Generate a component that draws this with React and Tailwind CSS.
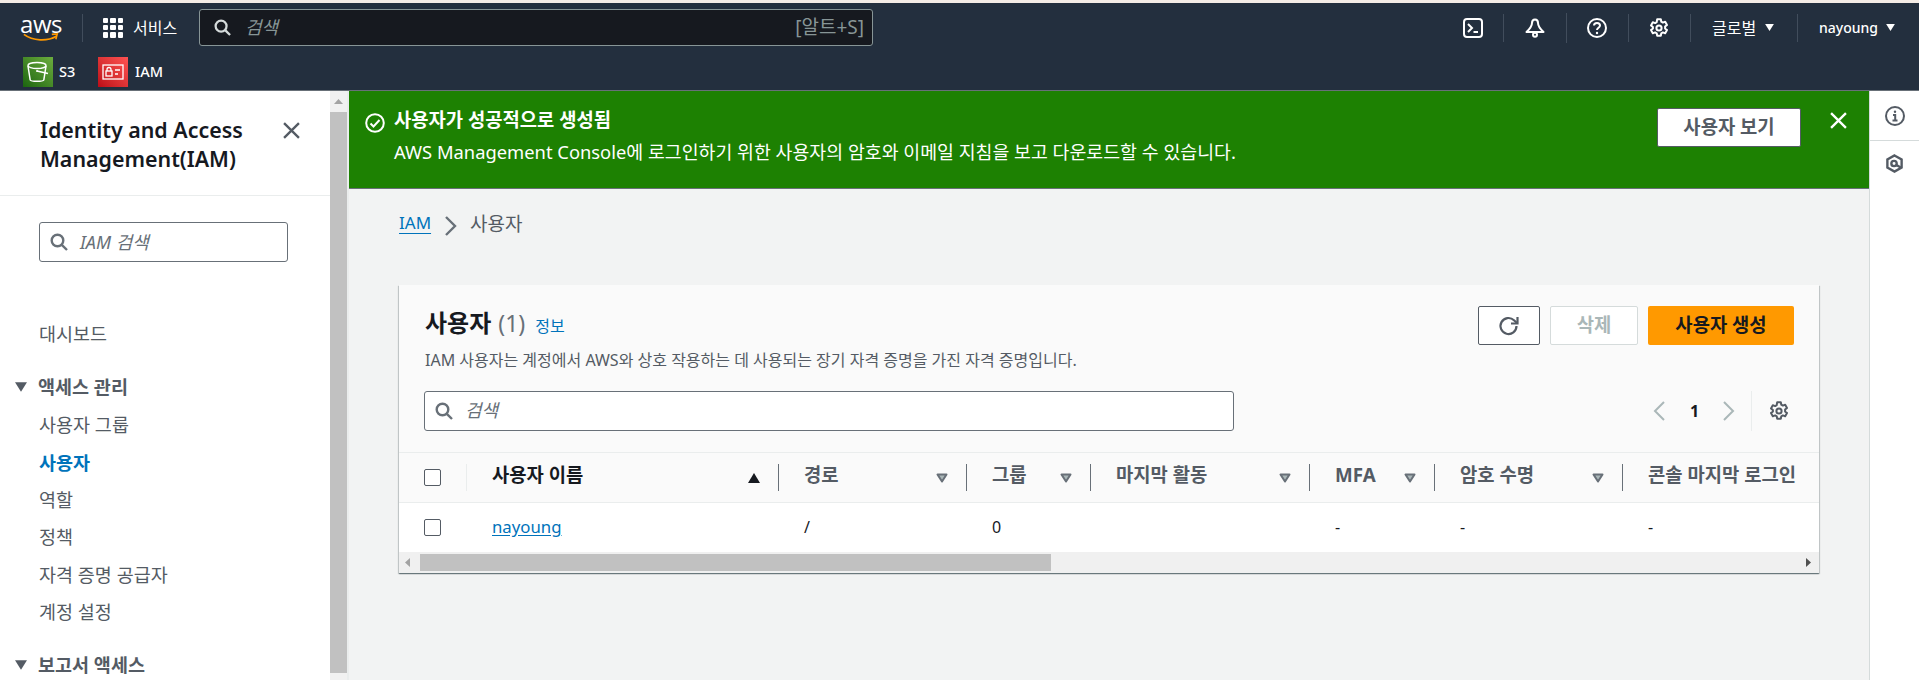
import React from "react";

function Search({ className }) {
  return (
    <svg className={className} viewBox="0 0 18 18" fill="none" stroke="currentColor" strokeWidth="2.4">
      <circle cx="7.5" cy="7.5" r="5.8" />
      <path d="M11.8 11.8L17 17" />
    </svg>
  );
}

function Close({ className }) {
  return (
    <svg className={className} viewBox="0 0 16 16" fill="none" stroke="currentColor" strokeWidth="2.2">
      <path d="M1 1l14 14M15 1L1 15" />
    </svg>
  );
}

function Gear({ className }) {
  return (
    <svg className={className} viewBox="0 0 20 20" fill="none" stroke="currentColor" strokeWidth="2" strokeLinejoin="round">
      <path d="M8.2 1.2h3.6l.5 2.5 1.5.9 2.4-.8 1.8 3.1-1.9 1.7v1.8l1.9 1.7-1.8 3.1-2.4-.8-1.5.9-.5 2.5H8.2l-.5-2.5-1.5-.9-2.4.8-1.8-3.1 1.9-1.7V9.1L2 7.4l1.8-3.1 2.4.8 1.5-.9z" />
      <circle cx="10" cy="10" r="2.6" />
    </svg>
  );
}

function Caret({ className }) {
  return (
    <svg className={className} viewBox="0 0 10 8" fill="currentColor">
      <path d="M0 0h10L5 8z" />
    </svg>
  );
}

function SortCaret() {
  return (
    <svg className="w-3 h-[10px] text-[#687078] shrink-0" viewBox="0 0 12 10" fill="#aab7b8" stroke="currentColor" strokeWidth="2" strokeLinejoin="round">
      <path d="M1.5 1.5h9L6 8.5z" />
    </svg>
  );
}

function Divider({ className }) {
  return <div className={"w-px shrink-0 " + className} />;
}

function Logo() {
  return (
    <div className="w-[38px] h-[28px] flex flex-col items-center">
      <span className="text-white text-[24px] leading-[20px] font-['Open_Sans','Noto_Sans',sans-serif] tracking-[-0.5px]">aws</span>
      <svg className="w-[40px] h-[10px] -mt-[1px]" viewBox="0 0 40 10" fill="none">
        <path d="M1 1.5C11 9 27 9.5 37 3.5" stroke="#ff9900" strokeWidth="2" />
        <path d="M32 1.5l6-.5-1.5 6" stroke="#ff9900" strokeWidth="1.8" />
      </svg>
    </div>
  );
}

function GridIcon() {
  return (
    <div className="grid grid-cols-3 gap-[2px] w-[20px] h-[20px]">
      {[0, 1, 2, 3, 4, 5, 6, 7, 8].map((i) => (
        <div key={i} className="bg-white rounded-[1px]" />
      ))}
    </div>
  );
}

function TopNav() {
  return (
    <div className="h-[88px] bg-[#232f3e] border-b border-[#687078] flex flex-col shrink-0">
      <div className="h-[54px] flex items-start pt-[6px] pl-[22px] text-white">
        <div className="h-[37px] flex items-center w-[60px]"><Logo /></div>
        <div className="h-[37px] flex items-center">
          <Divider className="h-[28px] bg-[#414d5c]" />
          <div className="ml-[20px]"><GridIcon /></div>
          <span className="ml-[10px] w-[66px] text-[16px]">서비스</span>
        </div>
        <div className="w-[674px] h-[37px] bg-[#16191f] border border-[#879596] rounded-[3px] flex items-center pl-[14px] pr-[8px] text-[#d5dbdb]">
          <Search className="w-[17px] h-[17px]" />
          <span className="ml-[14px] italic text-[18px] text-[#879596]">검색</span>
          <span className="ml-auto text-[19px] text-[#879596]">[알트+S]</span>
        </div>
        <div className="ml-[590px] flex items-center h-[37px]">
          <svg className="w-5 h-5" viewBox="0 0 20 20" fill="none" stroke="white" strokeWidth="2">
            <rect x="1" y="1" width="18" height="18" rx="3" />
            <path d="M5 6l4 4-4 4M10.5 14h4.5" />
          </svg>
          <Divider className="h-[28px] bg-[#414d5c] ml-[20px]" />
          <svg className="w-5 h-5 ml-[21px]" viewBox="0 0 20 20" fill="none" stroke="white" strokeWidth="2" strokeLinejoin="round">
            <path d="M10 1.5c-2 0-3 1.5-3 3.5 0 2.5-1.800 5.5-5.500 9h17c-3.700-3.500-5.500-6.500-5.500-9 0-2-1-3.500-3-3.500z" />
            <circle cx="10" cy="16.8" r="2" />
          </svg>
          <Divider className="h-[30px] w-[2px] bg-[#414d5c] ml-[21px]" />
          <svg className="w-5 h-5 ml-[20px]" viewBox="0 0 20 20" fill="none" stroke="white" strokeWidth="2">
            <circle cx="10" cy="10" r="9" />
            <path d="M7 7.5C7 5.5 8.5 5 10 5s3 .8 3 2.5c0 2.2-3 2.3-3 4.5" />
            <circle cx="10" cy="15" r="1.2" fill="white" stroke="none" />
          </svg>
          <Divider className="h-[28px] bg-[#414d5c] ml-[21px]" />
          <Gear className="w-5 h-5 ml-[20px]" />
          <Divider className="h-[28px] bg-[#414d5c] ml-[21px]" />
          <span className="ml-[21px] text-[16px] w-[53px]">글로벌</span>
          <Caret className="w-[9px] h-[7px]" />
          <Divider className="h-[28px] bg-[#414d5c] ml-[23px]" />
          <span className="ml-[21px] text-[14px] font-medium w-[67px]">nayoung</span>
          <Caret className="w-[9px] h-[7px]" />
        </div>
      </div>
      <div className="flex items-center pl-[23px] h-[30px] text-white text-[14.5px] font-medium">
        <div className="w-[30px] h-[30px] bg-linear-to-tr from-[#1b660f] to-[#6cae3e] flex items-center justify-center">
          <svg className="w-[24px] h-[24px]" viewBox="0 0 24 24" fill="none" stroke="white" strokeWidth="1.5">
            <ellipse cx="11" cy="5.5" rx="9" ry="3" />
            <path d="M2 6l2.200 14c1 1.800 12.600 1.800 13.600 0L20 6" />
            <path d="M11 11l11 2.500" />
            <circle cx="11" cy="11" r="1" fill="white" stroke="none" />
          </svg>
        </div>
        <span className="ml-[6px] w-[39px]">S3</span>
        <div className="w-[30px] h-[30px] bg-linear-to-tr from-[#bd0816] to-[#ff5252] flex items-center justify-center">
          <svg className="w-[22px] h-[22px]" viewBox="0 0 22 22" fill="none" stroke="white" strokeWidth="1.3">
            <rect x="1" y="4" width="20" height="14" />
            <rect x="4" y="10" width="6" height="5" />
            <path d="M5 10V8.5a2 2 0 0 1 4 0V10M13 9h5M13 13h3" />
          </svg>
        </div>
        <span className="ml-[7px]">IAM</span>
      </div>
    </div>
  );
}

function NavItem({ children, active }) {
  return (
    <div className={"h-[37.4px] flex items-center pl-[39px] text-[18.5px] " + (active ? "font-bold text-[#0073bb]" : "text-[#545b64]")}>
      {children}
    </div>
  );
}

function NavSection({ children }) {
  return (
    <div className="h-[37px] flex items-center pl-[15px] text-[18.5px] font-bold text-[#545b64]">
      <Caret className="w-[12px] h-[10px] mr-[11px]" />
      {children}
    </div>
  );
}

function Sidebar() {
  return (
    <div className="w-[349px] flex shrink-0 overflow-hidden border-r-2 border-[#eaeded]">
      <div className="w-[330px] bg-white flex flex-col shrink-0">
        <div className="h-[105px] shrink-0 border-b border-[#eaeded] pl-[40px] pr-[30px] pt-[24px] flex items-start justify-between">
          <div className="text-[21.4px] leading-[29px] font-semibold text-[#16191f]">Identity and Access<br />Management(IAM)</div>
          <Close className="w-[17px] h-[17px] mt-[7px] text-[#545b64]" />
        </div>
        <div className="pl-[39px] pt-[26px]">
          <div className="w-[249px] h-[40px] border border-[#687078] rounded-[3px] flex items-center pl-[10px] text-[#545b64]">
            <Search className="w-[18px] h-[18px] text-[#687078]" />
            <span className="ml-[12px] italic text-[18px] text-[#687078]">IAM 검색</span>
          </div>
        </div>
        <div className="mt-[30px] mx-[24px] w-[279px] h-px bg-[#eaeded]" />
        <div className="mt-[23px]"><NavItem>대시보드</NavItem></div>
        <div className="mt-[16px]"><NavSection>액세스 관리</NavSection></div>
        <div className="mt-[1px]">
          <NavItem>사용자 그룹</NavItem>
          <NavItem active>사용자</NavItem>
          <NavItem>역할</NavItem>
          <NavItem>정책</NavItem>
          <NavItem>자격 증명 공급자</NavItem>
          <NavItem>계정 설정</NavItem>
        </div>
        <div className="mt-[16px]"><NavSection>보고서 액세스</NavSection></div>
      </div>
      <div className="w-[17px] bg-[#f1f1f1] flex flex-col shrink-0">
        <div className="h-[21px] flex items-center justify-center">
          <svg className="w-[9px] h-[5px]" viewBox="0 0 9 5" fill="#a3a3a3"><path d="M4.5 0L9 5H0z" /></svg>
        </div>
        <div className="h-[561px] bg-[#c1c1c1]" />
      </div>
    </div>
  );
}

const columns = [
  { name: "사용자 이름", w: "w-[312px]", strong: true, sort: "asc", cell: <a className="text-[#0073bb] underline underline-offset-2 text-[16.8px]">nayoung</a> },
  { name: "경로", w: "w-[188px]", cell: "/" },
  { name: "그룹", w: "w-[124px]", cell: "0" },
  { name: "마지막 활동", w: "w-[219px]", cell: "" },
  { name: "MFA", w: "w-[125px]", cell: "-" },
  { name: "암호 수명", w: "w-[188px]", cell: "-" },
  { name: "콘솔 마지막 로그인", w: "flex-1", cell: "-", last: true },
];

function Checkbox() {
  return <div className="w-[17px] h-[17px] bg-white border border-[#545b64] rounded-[2px]" />;
}

function UsersTable() {
  return (
    <div className="flex flex-col">
      <div className="h-[51px] bg-[#fafafa] border-y border-[#eaeded] flex items-center">
        <div className="w-[68px] h-[27px] flex items-center pl-[25px] border-r border-[#eaeded] shrink-0"><Checkbox /></div>
        {columns.map((col) => (
          <div key={col.name} className={col.w + " h-[27px] flex items-center pl-[25px] " + (col.last ? "" : "pr-[18px] border-r border-[#687078] shrink-0")}>
            <span className={"text-[18.8px] mb-[5px] font-bold whitespace-nowrap " + (col.strong ? "text-[#16191f]" : "text-[#545b64]")}>{col.name}</span>
            {col.sort === "asc" && <svg className="ml-auto w-3 h-[10px]" viewBox="0 0 12 10" fill="#16191f"><path d="M6 0l6 10H0z" /></svg>}
            {!col.sort && !col.last && <div className="ml-auto"><SortCaret /></div>}
          </div>
        ))}
      </div>
      <div className="h-[49px] bg-white flex items-center">
        <div className="w-[68px] flex items-center pl-[25px] shrink-0"><Checkbox /></div>
        {columns.map((col) => (
          <div key={col.name} className={col.w + " pl-[25px] mb-[2px] text-[16px] text-[#16191f] " + (col.last ? "" : "shrink-0")}>{col.cell}</div>
        ))}
      </div>
      <div className="h-[21px] bg-[#f0f0f0] flex items-center pl-[6px] pr-[8px]">
        <svg className="w-[5px] h-[9px] text-[#a3a3a3]" viewBox="0 0 5 9" fill="currentColor"><path d="M5 0v9L0 4.5z" /></svg>
        <div className="ml-[10px] w-[631px] h-[17px] bg-[#c1c1c1]" />
        <svg className="ml-auto w-[5px] h-[9px] text-[#505050]" viewBox="0 0 5 9" fill="currentColor"><path d="M0 0v9l5-4.5z" /></svg>
      </div>
    </div>
  );
}

function Card() {
  return (
    <div className="w-[1420px] bg-[#fafafa] shadow-[0_1px_1px_0_rgba(0,28,36,0.4),1px_1px_1px_0_rgba(0,28,36,0.15),-1px_1px_1px_0_rgba(0,28,36,0.15)]">
      <div className="pl-[26px] pr-[25px] pt-[21px] h-[167px]">
        <div className="flex items-start justify-between">
          <div className="pt-[1px] flex items-baseline">
            <span className="text-[24px] leading-[32px] font-bold text-[#16191f]">사용자</span>
            <span className="ml-[7px] text-[23px] leading-[32px] text-[#687078]">(1)</span>
            <span className="ml-[10px] text-[16px] text-[#0073bb]">정보</span>
          </div>
          <div className="flex gap-[10px] text-[18.8px] font-bold">
            <div className="w-[62px] h-[39px] bg-white border border-[#545b64] rounded-[2px] flex items-center justify-center">
              <svg className="w-[22px] h-[22px] text-[#545b64]" viewBox="0 0 22 22" fill="none" stroke="currentColor" strokeWidth="2.2">
                <path d="M18.5 11a8 8 0 1 1-2.5-5.8L19 8" />
                <path d="M19.5 2v6.5H13" />
              </svg>
            </div>
            <div className="w-[88px] h-[39px] bg-white border border-[#d5dbdb] rounded-[2px] flex items-center justify-center text-[#aab7b8]">삭제</div>
            <div className="w-[146px] h-[39px] bg-[#ff9900] rounded-[2px] flex items-center justify-center text-[#16191f]">사용자 생성</div>
          </div>
        </div>
        <div className="mt-[5px] text-[16px] leading-[20px] text-[#545b64]">IAM 사용자는 계정에서 AWS와 상호 작용하는 데 사용되는 장기 자격 증명을 가진 자격 증명입니다.</div>
        <div className="mt-[21px] flex items-center">
          <div className="-ml-[1px] w-[810px] h-[40px] bg-white border border-[#687078] rounded-[3px] flex items-center pl-[10px]">
            <Search className="w-[18px] h-[18px] text-[#687078]" />
            <span className="ml-[12px] italic text-[18px] text-[#687078] mb-[2px]">검색</span>
          </div>
          <div className="ml-auto flex items-center">
            <svg className="w-[12px] h-[20px]" viewBox="0 0 12 20" fill="none" stroke="#aab7b8" strokeWidth="2"><path d="M11 1L2 10l9 9" /></svg>
            <span className="ml-[25px] w-[33px] text-[16px] font-bold text-[#16191f]">1</span>
            <svg className="w-[12px] h-[20px]" viewBox="0 0 12 20" fill="none" stroke="#aab7b8" strokeWidth="2"><path d="M1 1l9 9-9 9" /></svg>
            <Divider className="h-[40px] bg-[#eaeded] ml-[16px]" />
            <Gear className="w-[20px] h-[20px] text-[#545b64] ml-[17px] mr-[5px]" />
          </div>
        </div>
      </div>
      <UsersTable />
    </div>
  );
}

function Banner() {
  return (
    <div className="h-[98px] bg-[#1d8102] border-b border-[#687078] shrink-0 flex text-white pl-[16px] pr-[22px]">
      <svg className="w-[20px] h-[20px] mt-[22px] shrink-0" viewBox="0 0 20 20" fill="none" stroke="white" strokeWidth="2">
        <circle cx="10" cy="10" r="8.8" />
        <path d="M5.5 10.5l3 3 6-6.5" />
      </svg>
      <div className="ml-[9px] pt-[15px]">
        <div className="text-[18.8px] leading-[28px] font-bold">사용자가 성공적으로 생성됨</div>
        <div className="mt-[4px] text-[18.35px] leading-[28px]">AWS Management Console에 로그인하기 위한 사용자의 암호와 이메일 지침을 보고 다운로드할 수 있습니다.</div>
      </div>
      <div className="ml-auto pt-[17px] flex items-start">
        <div className="w-[144px] h-[39px] bg-white border border-[#545b64] rounded-[2px] flex items-center justify-center text-[18.8px] font-bold text-[#545b64]">사용자 보기</div>
        <Close className="w-[17px] h-[17px] text-white ml-[29px] mt-[4px]" />
      </div>
    </div>
  );
}

function Rail() {
  return (
    <div className="w-[50px] bg-white border-l border-[#d5dbdb] shrink-0 flex flex-col">
      <div className="h-[50px] border-b border-[#d5dbdb] flex items-center justify-center">
        <svg className="w-5 h-5" viewBox="0 0 20 20" fill="none" stroke="#545b64" strokeWidth="2">
          <circle cx="10" cy="10" r="9" />
          <path d="M8 9h2.2v5.5M7.5 14.5h5" />
          <circle cx="10" cy="5.8" r="1.2" fill="#545b64" stroke="none" />
        </svg>
      </div>
      <div className="h-[44px] flex items-center justify-center">
        <svg className="w-[19px] h-[19px]" viewBox="0 0 20 20" fill="none" stroke="#545b64" strokeWidth="2.5">
          <path d="M10 1.5l7.5 4.3v8.4L10 18.5l-7.5-4.3V5.8z" />
          <circle cx="9.5" cy="10" r="2.8" />
          <path d="M12 11.5l5 3" />
        </svg>
      </div>
    </div>
  );
}

export default function App() {
  return (
    <div className="h-[680px] w-[1919px] overflow-hidden flex flex-col bg-[#f2f3f3] font-['Noto_Sans','Noto_Sans_CJK_KR',sans-serif]">
      <div className="h-[3px] bg-[#f4ece6] shrink-0" />
      <TopNav />
      <div className="flex flex-1 min-h-0">
        <Sidebar />
        <div className="flex-1 flex flex-col min-w-0">
          <Banner />
          <div className="flex-1 pl-[50px]">
            <div className="h-[96px] pt-[21px] flex items-start">
              <a className="text-[#0073bb] text-[17px] underline underline-offset-4">IAM</a>
              <svg className="w-[13px] h-[20px] ml-[13px] mt-[6px]" viewBox="0 0 13 20" fill="none" stroke="#687078" strokeWidth="2.4"><path d="M2 1l9 9-9 9" /></svg>
              <span className="ml-[13px] text-[19px] text-[#545b64]">사용자</span>
            </div>
            <Card />
          </div>
        </div>
        <Rail />
      </div>
    </div>
  );
}
